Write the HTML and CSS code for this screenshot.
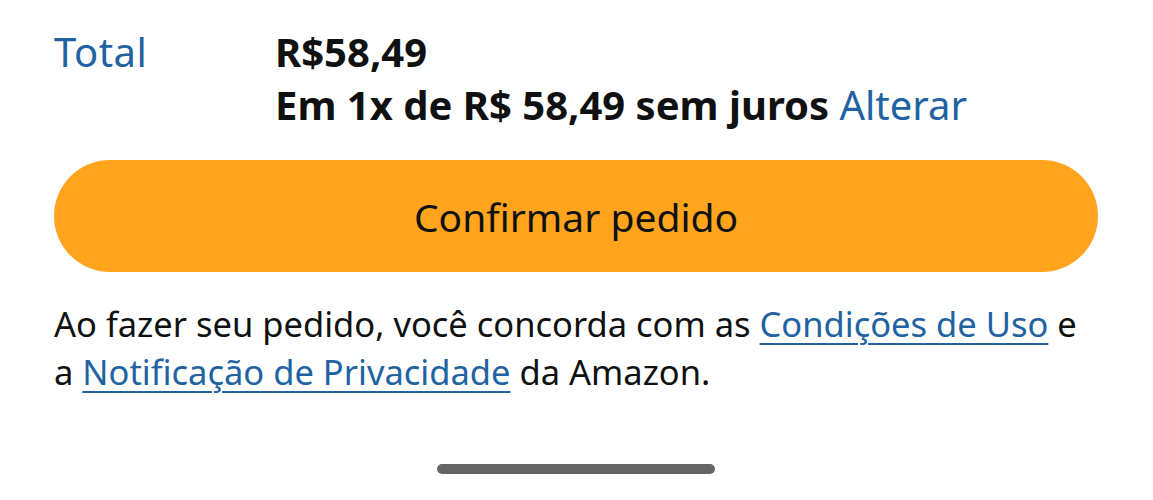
FILE: index.html
```html
<!DOCTYPE html>
<html lang="pt-BR">
<head>
    <meta charset="UTF-8">
    <meta name="viewport" content="width=device-width, initial-scale=1.0">
    <title>Confirmar pedido</title>
    <link rel="stylesheet" href="styles.css">
</head>
<body>
    <div class="checkout">
        <div class="total-row">
            <div class="total-label">Total</div>
            <div class="total-value">
                <div class="price">R$58,49</div>
                <div class="installments">Em 1x de R$ 58,49 sem juros <a href="#" class="change-link">Alterar</a></div>
            </div>
        </div>

        <button class="confirm-btn">Confirmar pedido</button>

        <p class="legal">
            Ao fazer seu pedido, você concorda com as <a href="#" class="legal-link">Condições de Uso</a> e
            a <a href="#" class="legal-link">Notificação de Privacidade</a> da Amazon.
        </p>
    </div>

    <div class="home-bar"></div>
</body>
</html>
```

FILE: styles.css
```css
body {
    margin: 0;
    font-family: "Noto Sans", "Open Sans", sans-serif;
    color: #0f1111;
    background-color: #ffffff;
}
.checkout {
    padding: 25px 55px 0 54px;
}
.total-row {
    display: grid;
    grid-template-columns: 221px 1fr;
    font-size: 40px;
    line-height: 53px;
}
.total-label {
    color: #2162a1;
    letter-spacing: 0.5px;
}
.total-value {
    font-weight: bold;
}
.change-link {
    color: #2162a1;
    font-weight: normal;
    text-decoration: none;
}
.confirm-btn {
    display: block;
    width: 100%;
    height: 112px;
    margin-top: 29px;
    border: none;
    border-radius: 56px;
    background-color: #ffa41c;
    color: #0f1111;
    font-family: inherit;
    font-size: 39px;
    cursor: pointer;
}
.legal {
    margin: 28px 0 0;
    font-size: 34.5px;
    line-height: 48px;
}
.legal-link {
    color: #2162a1;
    text-decoration: underline;
    text-decoration-thickness: 2px;
    text-underline-offset: 6px;
}
.home-bar {
    position: absolute;
    left: 437px;
    top: 464px;
    width: 278px;
    height: 10px;
    border-radius: 5px;
    background-color: #666666;
}
```
